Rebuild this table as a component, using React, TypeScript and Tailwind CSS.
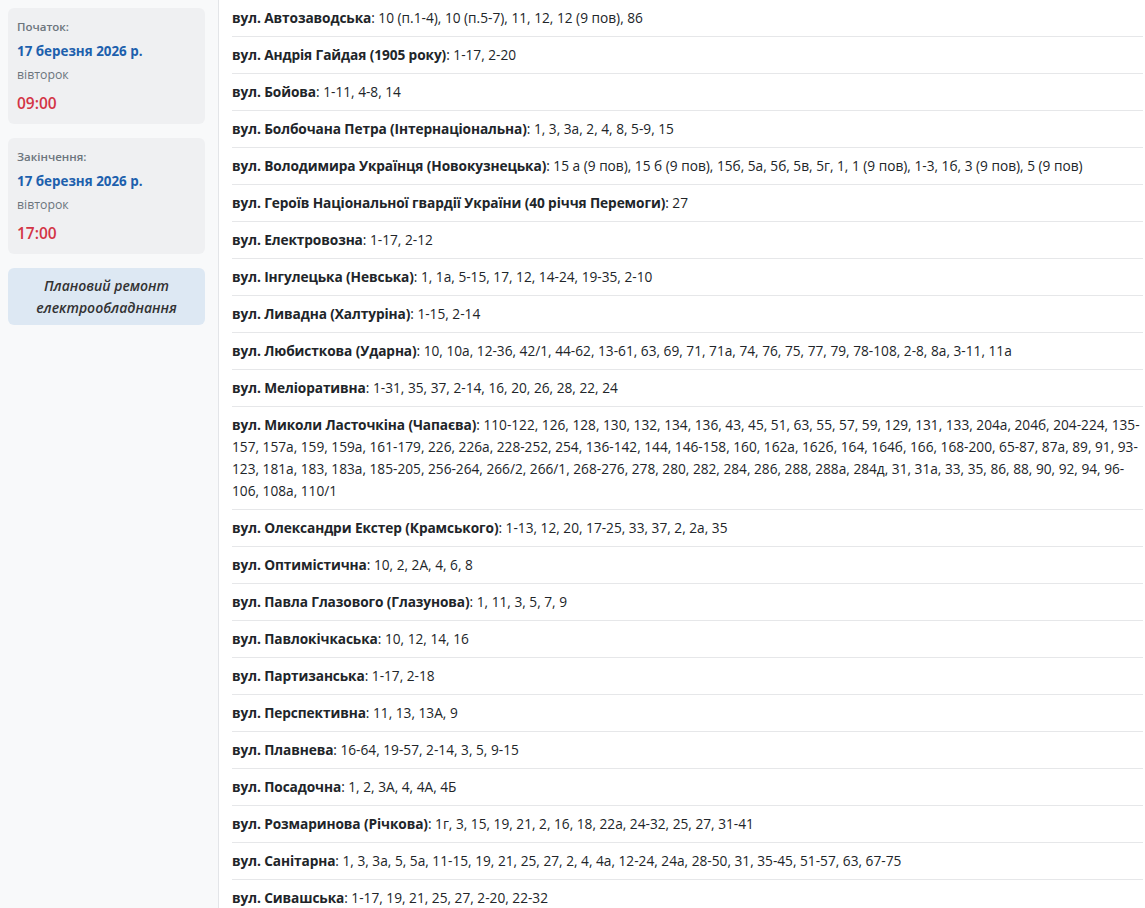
const streets: [string, string][] = [
  ['вул. Автозаводська', '10 (п.1-4), 10 (п.5-7), 11, 12, 12 (9 пов), 86'],
  ['вул. Андрія Гайдая (1905 року)', '1-17, 2-20'],
  ['вул. Бойова', '1-11, 4-8, 14'],
  ['вул. Болбочана Петра (Інтернаціональна)', '1, 3, 3а, 2, 4, 8, 5-9, 15'],
  [
    'вул. Володимира Українця (Новокузнецька)',
    '15 а (9 пов), 15 б (9 пов), 15б, 5а, 5б, 5в, 5г, 1, 1 (9 пов), 1-3, 1б, 3 (9 пов), 5 (9 пов)',
  ],
  ['вул. Героїв Національної гвардії України (40 річчя Перемоги)', '27'],
  ['вул. Електровозна', '1-17, 2-12'],
  ['вул. Інгулецька (Невська)', '1, 1а, 5-15, 17, 12, 14-24, 19-35, 2-10'],
  ['вул. Ливадна (Халтуріна)', '1-15, 2-14'],
  [
    'вул. Любисткова (Ударна)',
    '10, 10а, 12-36, 42/1, 44-62, 13-61, 63, 69, 71, 71а, 74, 76, 75, 77, 79, 78-108, 2-8, 8а, 3-11, 11а',
  ],
  ['вул. Меліоративна', '1-31, 35, 37, 2-14, 16, 20, 26, 28, 22, 24'],
  [
    'вул. Миколи Ласточкіна (Чапаєва)',
    '110-122, 126, 128, 130, 132, 134, 136, 43, 45, 51, 63, 55, 57, 59, 129, 131, 133, 204а, 204б, 204-224, 135-157, 157а, 159, 159а, 161-179, 226, 226а, 228-252, 254, 136-142, 144, 146-158, 160, 162а, 162б, 164, 164б, 166, 168-200, 65-87, 87а, 89, 91, 93-123, 181а, 183, 183а, 185-205, 256-264, 266/2, 266/1, 268-276, 278, 280, 282, 284, 286, 288, 288а, 284д, 31, 31а, 33, 35, 86, 88, 90, 92, 94, 96-106, 108а, 110/1',
  ],
  ['вул. Олександри Екстер (Крамського)', '1-13, 12, 20, 17-25, 33, 37, 2, 2а, 35'],
  ['вул. Оптимістична', '10, 2, 2А, 4, 6, 8'],
  ['вул. Павла Глазового (Глазунова)', '1, 11, 3, 5, 7, 9'],
  ['вул. Павлокічкаська', '10, 12, 14, 16'],
  ['вул. Партизанська', '1-17, 2-18'],
  ['вул. Перспективна', '11, 13, 13А, 9'],
  ['вул. Плавнева', '16-64, 19-57, 2-14, 3, 5, 9-15'],
  ['вул. Посадочна', '1, 2, 3А, 4, 4А, 4Б'],
  ['вул. Розмаринова (Річкова)', '1г, 3, 15, 19, 21, 2, 16, 18, 22а, 24-32, 25, 27, 31-41'],
  [
    'вул. Санітарна',
    '1, 3, 3а, 5, 5а, 11-15, 19, 21, 25, 27, 2, 4, 4а, 12-24, 24а, 28-50, 31, 35-45, 51-57, 63, 67-75',
  ],
  ['вул. Сивашська', '1-17, 19, 21, 25, 27, 2-20, 22-32'],
];

function TimeCard({ label, date, day, time }: { label: string; date: string; day: string; time: string }) {
  return (
    <div className="rounded-md bg-[#eff0f2] px-[9px] pt-[11px] pb-[10px]">
      <div className="text-[11.5px] leading-[16px] font-semibold text-[#6c757d]">{label}</div>
      <div className="mt-[7px] text-[13.4px] leading-[18px] font-bold text-[#1d60ad]">{date}</div>
      <div className="mt-[6px] text-[12.3px] leading-[18px] text-[#6c757d]">{day}</div>
      <div className="mt-[8px] text-[15.5px] leading-[22px] font-semibold text-[#d33445]">{time}</div>
    </div>
  );
}

export default function App() {
  return (
    <div
      className="flex min-h-[908px] bg-white text-[#212529]"
      style={{ fontFamily: '"Open Sans", "Noto Sans", sans-serif' }}
    >
      <aside className="w-[219px] shrink-0 border-r border-[#e3e5e8] bg-[#f8f9fa] pt-2 pl-2 pr-[13px]">
        <div className="flex flex-col gap-[14px]">
          <TimeCard label="Початок:" date="17 березня 2026 р." day="вівторок" time="09:00" />
          <TimeCard label="Закінчення:" date="17 березня 2026 р." day="вівторок" time="17:00" />
          <div className="rounded-md bg-[#dde8f3] px-2 py-[6.5px] text-center text-[14px] leading-[22px] font-semibold italic text-[#333]">
            Плановий ремонт електрообладнання
          </div>
        </div>
      </aside>
      <main className="flex-1 pl-[13px] pr-[2px]">
        {streets.map(([name, houses]) => (
          <div key={name} className="border-b border-[#e6e7e9] py-[7px] text-[13.7px] leading-[22px]">
            <span className="font-bold tracking-[-0.1px]">{name}</span>: {houses}
          </div>
        ))}
      </main>
    </div>
  );
}
